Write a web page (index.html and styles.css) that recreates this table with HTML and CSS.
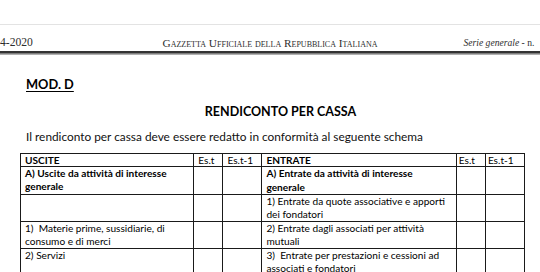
FILE: index.html
```html
<!DOCTYPE html>
<html lang="it">
<head>
<meta charset="utf-8">
<title>Rendiconto per cassa</title>
<link rel="stylesheet" href="styles.css">
</head>
<body>
<div class="topbar"></div>
<header class="gu-head">
  <span class="gu-date">4-2020</span>
  <span class="gu-title">Gazzetta Ufficiale della Repubblica Italiana</span>
  <span class="gu-serie"><i>Serie generale</i> - n.</span>
</header>
<div class="gu-rule"></div>
<main class="doc">
  <h2 class="mod">MOD. D</h2>
  <h1 class="title">RENDICONTO PER CASSA</h1>
  <p class="intro">Il rendiconto per cassa deve essere redatto in conformità al seguente schema</p>
  <table class="rc">
    <colgroup>
      <col class="c-desc-l">
      <col class="c-es">
      <col class="c-es1">
      <col class="c-desc-r">
      <col class="c-es">
      <col class="c-es1">
    </colgroup>
    <tr class="r-head">
      <th>USCITE</th><th class="es">Es.t</th><th class="es">Es.t-1</th>
      <th>ENTRATE</th><th class="es es-r">Es.t</th><th class="es es-r">Es.t-1</th>
    </tr>
    <tr class="r-a">
      <th>A) Uscite da attività di interesse generale</th><td></td><td></td>
      <th class="wide-lh">A) Entrate da attività di interesse generale</th><td></td><td></td>
    </tr>
    <tr class="r-n">
      <td></td><td></td><td></td>
      <td>1) Entrate da quote associative e apporti dei fondatori</td><td></td><td></td>
    </tr>
    <tr class="r-n">
      <td>1)&nbsp; Materie prime, sussidiarie, di consumo e di merci</td><td></td><td></td>
      <td>2) Entrate dagli associati per attività mutuali</td><td></td><td></td>
    </tr>
    <tr class="r-n">
      <td>2) Servizi</td><td></td><td></td>
      <td>3)&nbsp; Entrate per prestazioni e cessioni ad associati e fondatori</td><td></td><td></td>
    </tr>
  </table>
</main>
</body>
</html>
```
FILE: styles.css
```css
html, body {
  margin: 0;
  padding: 0;
  background: #ffffff;
  overflow: hidden;
}
body {
  width: 540px;
  height: 272px;
  font-family: "Lato", "Liberation Sans", sans-serif;
  color: #000;
}
.topbar {
  height: 24px;
  border-bottom: 1px solid #e3e3e3;
}
.gu-head {
  display: grid;
  grid-template-columns: minmax(0, 1fr) auto minmax(0, 1fr);
  align-items: end;
  height: 26px;
  padding-bottom: 1px;
  box-sizing: border-box;
  font-family: "Liberation Serif", "Times New Roman", serif;
  color: #2e2e2e;
  line-height: 14px;
  white-space: nowrap;
}
.gu-date {
  font-size: 11.6px;
  justify-self: start;
}
.gu-title {
  font-size: 11.3px;
  font-variant: small-caps;
}
.gu-serie {
  font-size: 9.6px;
  justify-self: start;
  padding-left: 86px;
}
.gu-rule {
  height: 1px;
  border-top: 2px solid #333;
  border-bottom: 1px solid #b0b0b0;
  background: #7e7e7e;
}
.doc {
  padding: 0 16px 0 20px;
}
.mod {
  margin: 21px 0 0 6px;
  font-size: 12.8px;
  line-height: 16px;
  font-weight: 700;
  text-decoration: underline;
  text-underline-offset: 2px;
}
.title {
  margin: 12px 0 0;
  padding-left: 17px;
  text-align: center;
  font-size: 12.5px;
  line-height: 16px;
  font-weight: 700;
}
.intro {
  margin: 10px 0 0 6px;
  font-size: 11.85px;
  line-height: 14px;
  color: #111;
}
.rc {
  margin-top: 9px;
  border-collapse: collapse;
  table-layout: fixed;
  width: 505px;
  font-size: 10.1px;
  line-height: 12.5px;
}
.c-desc-l { width: 173px; }
.c-es { width: 29px; }
.c-es1 { width: 39px; }
.c-desc-r { width: 194px; }
.rc th, .rc td {
  border: 1px solid #1a1a1a;
  padding: 0 3px 0 4px;
  vertical-align: top;
  text-align: left;
}
.rc th { font-weight: 700; }
.rc th.es { font-weight: 400; }
.rc th.es-r { padding-left: 2px; }
.r-head th { height: 12px; line-height: 12px; }
.r-a th, .r-a td { height: 27px; }
.r-n td { height: 26px; }
.wide-lh { line-height: 13.5px; }
```
